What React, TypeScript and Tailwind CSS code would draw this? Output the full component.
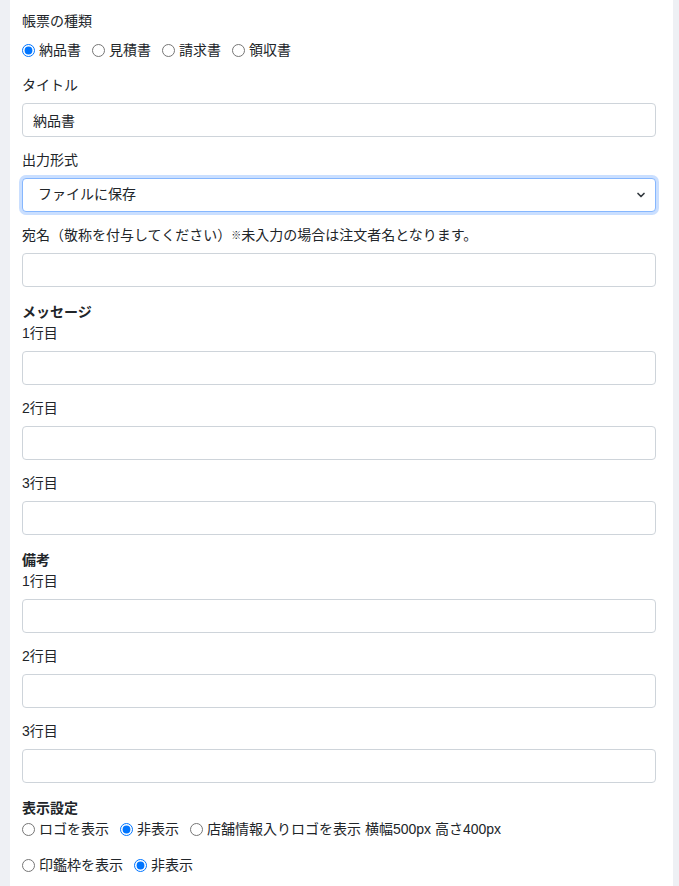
import { ChevronDown } from "lucide-react"

const font = { fontFamily: '"Liberation Sans", "Noto Sans CJK JP", sans-serif' }

function Radio({ name, label, checked }: { name: string; label: string; checked?: boolean }) {
  return (
    <label className="mr-[11px] inline-flex items-center">
      <input
        type="radio"
        name={name}
        defaultChecked={checked}
        className="m-0 mr-[4px] h-[13px] w-[13px] accent-[#0075ff]"
      />
      <span>{label}</span>
    </label>
  )
}

function TextField({ label, value = "" }: { label: string; value?: string }) {
  return (
    <div className="mb-[13.5px]">
      <div className="mb-[6.5px]">{label}</div>
      <input
        type="text"
        defaultValue={value}
        className="block h-[34px] w-full rounded-[4px] border border-[#ced4da] bg-white px-[10px] text-[14px] text-[#212529] outline-none"
      />
    </div>
  )
}

function LineGroup({ title }: { title: string }) {
  return (
    <div className="pt-[2px]">
      <div className="font-bold">{title}</div>
      <TextField label="1行目" />
      <TextField label="2行目" />
      <TextField label="3行目" />
    </div>
  )
}

export default function App() {
  return (
    <div className="min-h-screen bg-[#eef0f4] pl-[10px] pr-[6px]" style={font}>
      <div className="min-h-screen bg-white pl-3 pr-[17px] pt-[11px] text-[14px] leading-[21px] text-[#212529]">
        <div className="mb-[14px]">
          <div className="mb-2">帳票の種類</div>
          <div className="flex items-center">
            <Radio name="kind" label="納品書" checked />
            <Radio name="kind" label="見積書" />
            <Radio name="kind" label="請求書" />
            <Radio name="kind" label="領収書" />
          </div>
        </div>

        <TextField label="タイトル" value="納品書" />

        <div className="mb-[13.5px]">
          <div className="mb-[6.5px]">出力形式</div>
          <div className="relative">
            <select
              defaultValue="file"
              className="block h-[34px] w-full appearance-none rounded-[4px] border border-[#86b7fe] bg-white pl-[15px] pr-8 text-[14px] text-[#212529] shadow-[0_0_0_3px_rgba(13,110,253,0.22)] outline-none"
            >
              <option value="file">ファイルに保存</option>
              <option value="print">印刷</option>
            </select>
            <ChevronDown
              className="pointer-events-none absolute right-[9px] top-1/2 h-[12px] w-[12px] -translate-y-1/2 text-[#343a40]"
              strokeWidth={3.4}
            />
          </div>
        </div>

        <div className="mb-[13.5px]">
          <div className="mb-[6.5px] h-[21px]">
            宛名（敬称を付与してください）<span className="align-top text-[10px] leading-[21px]">※</span>未入力の場合は注文者名となります。
          </div>
          <input
            type="text"
            className="block h-[34px] w-full rounded-[4px] border border-[#ced4da] bg-white px-[10px] text-[14px] outline-none"
          />
        </div>

        <LineGroup title="メッセージ" />
        <LineGroup title="備考" />

        <div className="pb-4 pt-[2px]">
          <div className="font-bold">表示設定</div>
          <div className="flex items-center">
            <Radio name="logo" label="ロゴを表示" />
            <Radio name="logo" label="非表示" checked />
            <Radio name="logo" label="店舗情報入りロゴを表示 横幅500px 高さ400px" />
          </div>
          <div className="mt-[15px] flex items-center">
            <Radio name="stamp" label="印鑑枠を表示" />
            <Radio name="stamp" label="非表示" checked />
          </div>
        </div>
      </div>
    </div>
  )
}
